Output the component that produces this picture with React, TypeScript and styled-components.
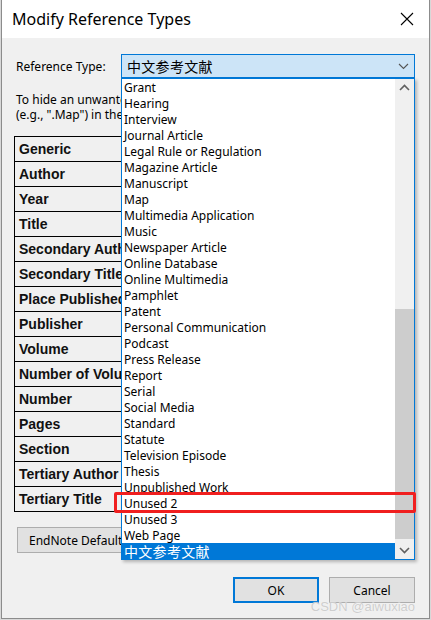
import { FC } from 'react';
import styled, { createGlobalStyle } from 'styled-components';

const GlobalStyle = createGlobalStyle`
  html, body {
    margin: 0;
    padding: 0;
    background: #d8d8d8;
  }
  * {
    box-sizing: border-box;
  }
`;

const UI_FONT = `"Noto Sans", "Noto Sans CJK SC", sans-serif`;

// the part of the dialog left of the open drop-down (x 14..121)
const LEFT_PANE = 107;

const Window = styled.div`
  position: relative;
  margin-left: 1px;
  width: 429px;
  height: 619px;
  border: 1px solid #8c8c8c;
  border-top: none;
  background: #f0f0f0;
  font-family: ${UI_FONT};
  color: #000;
  overflow: hidden;
`;

const TitleBar = styled.div`
  height: 38px;
  background: #fff;
  display: flex;
  align-items: center;
  justify-content: space-between;
  padding: 0 14px 0 10px;
  font-size: 16px;
`;

const CloseButton = styled.div`
  display: flex;
  align-items: center;
  justify-content: center;
  width: 16px;
  height: 16px;
`;

const Body = styled.div`
  padding: 16px 12px 0 12px;
`;

const TypeRow = styled.div`
  display: flex;
  align-items: center;
  height: 24px;
`;

const Label = styled.span`
  width: ${LEFT_PANE}px;
  padding-left: 2px;
  font-size: 12px;
`;

const ComboWrap = styled.div`
  position: relative;
  width: 294px;
  height: 24px;
`;

const ComboBox = styled.div`
  display: flex;
  align-items: center;
  justify-content: space-between;
  height: 24px;
  padding: 0 5px 0 5px;
  background: #cce4f7;
  border: 1px solid #0078d7;
`;

const Cjk = styled.span`
  font-size: 14px;
  letter-spacing: 0.3px;
`;

const HelpText = styled.div`
  margin-top: 14px;
  width: ${LEFT_PANE}px;
  overflow: hidden;
  padding-left: 2px;
  font-size: 12px;
  line-height: 15px;
  white-space: nowrap;
`;

const FieldTable = styled.div`
  margin-top: 14px;
  width: ${LEFT_PANE}px;
  border-left: 1px solid #000;
  border-bottom: 1px solid #000;
`;

const FieldRow = styled.div`
  display: flex;
  align-items: center;
  height: 25px;
  padding-left: 4px;
  border-top: 1px solid #000;
  overflow: hidden;
  white-space: nowrap;
  font-family: "Liberation Sans", Arial, sans-serif;
  font-weight: bold;
  font-size: 14px;
  color: #111;
`;

const PushButton = styled.button<{ $primary?: boolean; $width: number }>`
  flex-shrink: 0;
  width: ${p => p.$width}px;
  height: 26px;
  background: #e1e1e1;
  border: ${p => (p.$primary ? '2px solid #0078d7' : '1px solid #adadad')};
  font-family: ${UI_FONT};
  font-size: 12px;
  color: #000;
  padding: 0;
  display: flex;
  align-items: center;
  justify-content: center;
`;

const DefaultsClip = styled.div`
  display: flex;
  width: ${LEFT_PANE}px;
  margin-top: 15px;
  padding-left: 3px;
  overflow: hidden;
`;

const DefaultsButton = styled(PushButton)`
  justify-content: flex-start;
  padding-left: 11px;
  white-space: nowrap;
`;

const ButtonBar = styled.div`
  display: flex;
  justify-content: flex-end;
  gap: 10px;
  margin-top: 24px;
  padding-right: 2px;
`;

const DropList = styled.div`
  position: absolute;
  top: 100%;
  left: 0;
  width: 294px;
  height: 482px;
  display: flex;
  background: #fff;
  border: 1px solid #0078d7;
  box-shadow: 2px 2px 3px rgba(0, 0, 0, 0.25);
  z-index: 5;
`;

const ItemColumn = styled.div`
  flex: 1;
  display: flex;
  flex-direction: column;
`;

const Item = styled.div<{ $selected?: boolean }>`
  height: 16px;
  line-height: 15px;
  padding: 1px 0 0 2px;
  font-size: 12px;
  white-space: nowrap;
  background: ${p => (p.$selected ? '#0078d7' : 'transparent')};
  color: ${p => (p.$selected ? '#fff' : '#000')};
`;

const ScrollBar = styled.div`
  width: 19px;
  display: flex;
  flex-direction: column;
  background: #f0f0f0;
`;

const ScrollArrow = styled.div`
  height: 17px;
  display: flex;
  align-items: center;
  justify-content: center;
`;

const ScrollTrack = styled.div`
  flex: 1;
  display: flex;
  flex-direction: column;
  justify-content: flex-end;
  padding-bottom: 3px;
`;

const ScrollThumb = styled.div`
  height: 230px;
  background: #cdcdcd;
`;

const Highlight = styled.div`
  position: absolute;
  left: -7px;
  top: 438px;
  width: 302px;
  height: 21px;
  border: 3px solid #f01f1f;
  border-radius: 2px;
  z-index: 6;
`;

const Watermark = styled.div`
  position: absolute;
  right: 14px;
  bottom: 4px;
  font-family: "Liberation Sans", Arial, sans-serif;
  font-size: 13px;
  color: rgba(200, 200, 200, 0.9);
  text-shadow: 0 0 1px rgba(255, 255, 255, 0.8);
  z-index: 7;
`;

const Chevron: FC<{ up?: boolean; color?: string; width?: number }> = ({ up, color = '#606060', width = 1.6 }) => (
  <svg width="11" height="7" viewBox="0 0 11 7">
    <polyline
      points={up ? '1,6 5.5,1.5 10,6' : '1,1 5.5,5.5 10,1'}
      fill="none"
      stroke={color}
      strokeWidth={width}
    />
  </svg>
);

const fields = [
  'Generic',
  'Author',
  'Year',
  'Title',
  'Secondary Author',
  'Secondary Title',
  'Place Published',
  'Publisher',
  'Volume',
  'Number of Volumes',
  'Number',
  'Pages',
  'Section',
  'Tertiary Author',
  'Tertiary Title',
];

const types = [
  'Grant',
  'Hearing',
  'Interview',
  'Journal Article',
  'Legal Rule or Regulation',
  'Magazine Article',
  'Manuscript',
  'Map',
  'Multimedia Application',
  'Music',
  'Newspaper Article',
  'Online Database',
  'Online Multimedia',
  'Pamphlet',
  'Patent',
  'Personal Communication',
  'Podcast',
  'Press Release',
  'Report',
  'Serial',
  'Social Media',
  'Standard',
  'Statute',
  'Television Episode',
  'Thesis',
  'Unpublished Work',
  'Unused 2',
  'Unused 3',
  'Web Page',
];

const CHINESE = '中文参考文献';

export default function App() {
  return (
    <>
      <GlobalStyle />
      <Window>
        <TitleBar>
          <span>Modify Reference Types</span>
          <CloseButton>
            <svg width="14" height="14" viewBox="0 0 14 14">
              <path d="M1 1 L13 13 M13 1 L1 13" stroke="#000" strokeWidth="1.1" fill="none" />
            </svg>
          </CloseButton>
        </TitleBar>
        <Body>
          <TypeRow>
            <Label>Reference Type:</Label>
            <ComboWrap>
              <ComboBox>
                <Cjk>{CHINESE}</Cjk>
                <Chevron color="#555" width={1.1} />
              </ComboBox>
              <DropList>
                <ItemColumn>
                  {types.map(t => (
                    <Item key={t}>{t}</Item>
                  ))}
                  <Item $selected>
                    <Cjk>{CHINESE}</Cjk>
                  </Item>
                </ItemColumn>
                <ScrollBar>
                  <ScrollArrow>
                    <Chevron up />
                  </ScrollArrow>
                  <ScrollTrack>
                    <ScrollThumb />
                  </ScrollTrack>
                  <ScrollArrow>
                    <Chevron />
                  </ScrollArrow>
                </ScrollBar>
              </DropList>
              <Highlight />
            </ComboWrap>
          </TypeRow>
          <HelpText>
            To hide an unwanted reference type, put a period before its name
            <br />
            (e.g., ".Map") in the Generic column.
          </HelpText>
          <FieldTable>
            {fields.map(f => (
              <FieldRow key={f}>{f}</FieldRow>
            ))}
          </FieldTable>
          <DefaultsClip>
            <DefaultsButton $width={140}>EndNote Defaults</DefaultsButton>
          </DefaultsClip>
          <ButtonBar>
            <PushButton $primary $width={86}>
              OK
            </PushButton>
            <PushButton $width={86}>Cancel</PushButton>
          </ButtonBar>
        </Body>
        <Watermark>CSDN @aiwuxiao</Watermark>
      </Window>
    </>
  );
}
